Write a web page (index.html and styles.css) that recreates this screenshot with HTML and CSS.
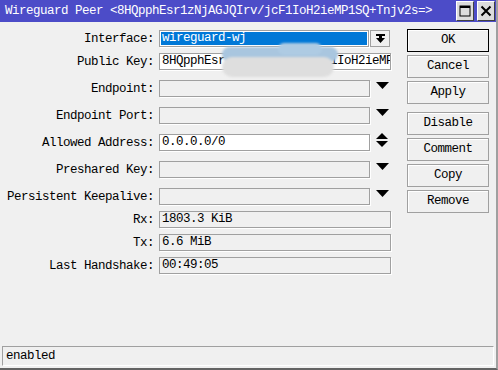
FILE: index.html
```html
<!DOCTYPE html>
<html lang="en">
  <head>
    <meta charset="UTF-8" />
    <title>Wireguard Peer</title>
    <link rel="stylesheet" href="styles.css">
  </head>
  <body>
    <div class="window">
      <div class="titlebar">
        <span class="title">Wireguard Peer &lt;8HQpphEsr1zNjAGJQIrv/jcF1IoH2ieMP1SQ+Tnjv2s=&gt;</span>
        <div class="title-buttons">
          <span class="tbtn">
            <svg width="12" height="12" viewBox="0 0 12 12"><rect x="1" y="1" width="10" height="10" fill="none" stroke="#000" stroke-width="1"/><rect x="1" y="1" width="10" height="2" fill="#000"/></svg>
          </span>
          <span class="tbtn">
            <svg width="12" height="12" viewBox="0 0 12 12"><path d="M1.5 1.5 L10.5 10.5 M10.5 1.5 L1.5 10.5" stroke="#000" stroke-width="2"/></svg>
          </span>
        </div>
      </div>

      <div class="main">
        <div class="form">
          <div class="row">
            <span class="label">Interface:</span>
            <div class="field selected"><span>wireguard-wj</span></div>
            <span class="drop-btn">
              <svg width="9" height="9" viewBox="0 0 9 9"><rect x="0" y="0" width="9" height="2" fill="#000"/><rect x="3" y="2" width="3" height="2" fill="#000"/><polygon points="0,4 9,4 4.5,9" fill="#000"/></svg>
            </span>
          </div>
          <div class="row">
            <span class="label">Public Key:</span>
            <div class="field wide white">8HQpphEsr1zNjAGJQIrv/jcF1IoH2ieMP1SQ+Tnjv2s=</div>
            <div class="redact">
              <span class="blob blue"></span>
              <span class="blob blue-top"></span>
              <span class="blob grey"></span>
            </div>
          </div>
          <div class="row gap">
            <span class="label">Endpoint:</span>
            <div class="field"></div>
            <span class="arrow"><svg width="13" height="7" viewBox="0 0 13 7"><polygon points="0,0 13,0 6.5,7" fill="#000"/></svg></span>
          </div>
          <div class="row gap">
            <span class="label">Endpoint Port:</span>
            <div class="field"></div>
            <span class="arrow"><svg width="13" height="7" viewBox="0 0 13 7"><polygon points="0,0 13,0 6.5,7" fill="#000"/></svg></span>
          </div>
          <div class="row gap">
            <span class="label">Allowed Address:</span>
            <div class="field white">0.0.0.0/0</div>
            <span class="arrow updown"><svg width="12" height="14" viewBox="0 0 12 14"><polygon points="6,0 12,6 0,6" fill="#000"/><polygon points="0,8 12,8 6,14" fill="#000"/></svg></span>
          </div>
          <div class="row gap">
            <span class="label">Preshared Key:</span>
            <div class="field"></div>
            <span class="arrow"><svg width="13" height="7" viewBox="0 0 13 7"><polygon points="0,0 13,0 6.5,7" fill="#000"/></svg></span>
          </div>
          <div class="row gap">
            <span class="label">Persistent Keepalive:</span>
            <div class="field"></div>
            <span class="arrow"><svg width="13" height="7" viewBox="0 0 13 7"><polygon points="0,0 13,0 6.5,7" fill="#000"/></svg></span>
          </div>
          <div class="row">
            <span class="label">Rx:</span>
            <div class="field wide">1803.3 KiB</div>
          </div>
          <div class="row">
            <span class="label">Tx:</span>
            <div class="field wide">6.6 MiB</div>
          </div>
          <div class="row">
            <span class="label">Last Handshake:</span>
            <div class="field wide">00:49:05</div>
          </div>
        </div>

        <div class="buttons">
          <div class="btn default">OK</div>
          <div class="btn">Cancel</div>
          <div class="btn">Apply</div>
          <div class="btn sep">Disable</div>
          <div class="btn">Comment</div>
          <div class="btn">Copy</div>
          <div class="btn">Remove</div>
        </div>
      </div>

      <div class="status">enabled</div>
    </div>
  </body>
</html>
```

FILE: styles.css
```css
body {
  margin: 0;
  background-color: #f0f0f0;
  color: #000;
  font-family: "Liberation Mono", "DejaVu Sans Mono", monospace;
  font-size: 12.5px;
  letter-spacing: -0.5px;
}

.window {
  height: 370px;
  box-sizing: border-box;
  border-right: 2px solid #a0a0a0;
  border-bottom: 2px solid #646464;
  display: flex;
  flex-direction: column;
}

/* title bar */
.titlebar {
  height: 22px;
  background-color: #4c4cc8;
  color: #fff;
  display: flex;
  align-items: flex-start;
  justify-content: space-between;
  padding: 0 1px 0 5px;
}

.title {
  line-height: 22px;
  white-space: nowrap;
}

.title-buttons {
  display: flex;
  gap: 3px;
  padding-top: 1px;
}

.tbtn {
  width: 18px;
  height: 20px;
  box-sizing: border-box;
  background-color: #dcdcdc;
  border: 1px solid;
  border-color: #fff #404040 #404040 #fff;
  display: flex;
  align-items: center;
  justify-content: center;
}

/* form */
.main {
  display: flex;
}

.form {
  width: 391px;
  padding-top: 8px;
}

.row {
  display: flex;
  align-items: center;
  height: 17px;
  margin-top: 6px;
  position: relative;
}

.row:first-child {
  margin-top: 0;
}

.row.gap {
  margin-top: 10px;
}

.label {
  width: 159px;
  box-sizing: border-box;
  padding-right: 5px;
  text-align: right;
  white-space: nowrap;
}

.field {
  width: 211px;
  height: 17px;
  box-sizing: border-box;
  border: 1px solid #a0a0a0;
  background-color: #f0f0f0;
  padding: 0 2px;
  line-height: 15px;
  white-space: nowrap;
  overflow: hidden;
  box-shadow: 1px 1px 0 #fff;
}

.field.wide {
  width: 232px;
}

.field.white {
  background-color: #fff;
}

.field.selected {
  width: 210px;
  background-color: #fff;
  padding: 1px;
}

.field.selected span {
  display: block;
  height: 13px;
  line-height: 13px;
  padding-left: 1px;
  background-color: #0078d7;
  color: #fff;
}

.drop-btn {
  width: 20px;
  height: 17px;
  margin-left: 1px;
  box-sizing: border-box;
  border: 1px solid #a0a0a0;
  background-color: #f0f0f0;
  display: flex;
  align-items: center;
  justify-content: center;
}

.arrow {
  align-self: flex-start;
  margin-left: 6px;
  margin-top: 2px;
  display: flex;
}

.arrow.updown {
  margin-top: -1px;
}

/* scribbled-out part of the key */
.redact {
  position: absolute;
  left: 220px;
  top: -10px;
  width: 120px;
  height: 36px;
  filter: blur(1px);
}

.blob {
  position: absolute;
  display: block;
}

.blob.blue {
  left: 2px;
  top: 4px;
  width: 116px;
  height: 15px;
  border-radius: 8px;
  background-color: #a9c6df;
}

.blob.blue-top {
  left: 58px;
  top: 0;
  width: 44px;
  height: 12px;
  border-radius: 7px;
  background-color: #aecbe3;
}

.blob.grey {
  left: 2px;
  top: 14px;
  width: 112px;
  height: 20px;
  border-radius: 10px;
  background-color: #dedede;
}

/* buttons */
.buttons {
  width: 82px;
  margin-left: 16px;
  padding-top: 7px;
  display: flex;
  flex-direction: column;
  gap: 3px;
}

.btn {
  height: 23px;
  box-sizing: border-box;
  border: 1px solid #a0a0a0;
  background-color: #f0f0f0;
  box-shadow: inset 1px 1px 0 #fff;
  text-align: center;
  line-height: 21px;
}

.btn.default {
  border-color: #000;
}

.btn.sep {
  margin-top: 5px;
}

/* status bar */
.status {
  margin: auto 2px 2px 2px;
  height: 20px;
  box-sizing: border-box;
  border: 1px solid;
  border-color: #a0a0a0 #fff #fff #a0a0a0;
  padding-left: 3px;
  line-height: 18px;
}
```
